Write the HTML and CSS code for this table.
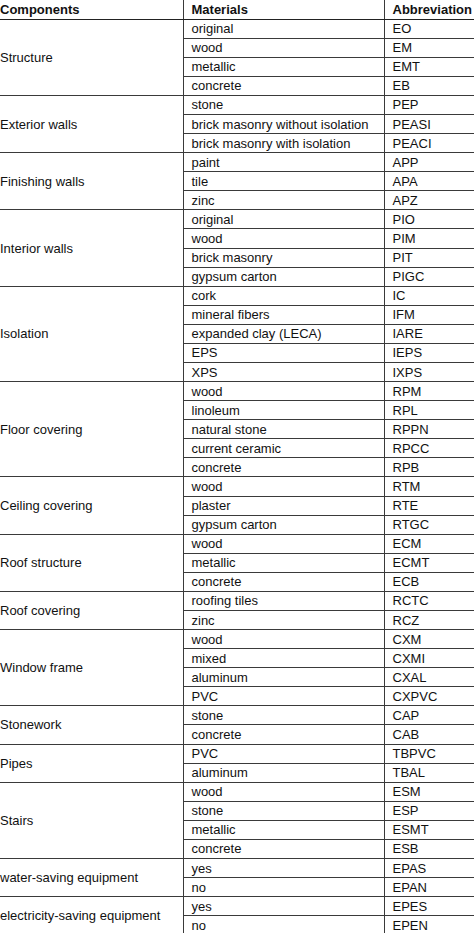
FILE: index.html
```html
<!DOCTYPE html>
<html lang="en">
<head>
<meta charset="utf-8">
<title>Components, materials and abbreviations</title>
<link rel="stylesheet" href="styles.css">
</head>
<body>
<div class="frame">
<table class="mat-table">
  <colgroup>
    <col class="col-comp">
    <col class="col-mat">
    <col class="col-abbr">
  </colgroup>
  <thead>
    <tr class="head-row">
      <th class="c-comp">Components</th>
      <th class="c-mat">Materials</th>
      <th class="c-abbr">Abbreviation</th>
    </tr>
  </thead>
  <tbody>
    <tr><td class="c-comp" rowspan="4">Structure</td><td class="c-mat">original</td><td class="c-abbr">EO</td></tr>
    <tr><td class="c-mat">wood</td><td class="c-abbr">EM</td></tr>
    <tr><td class="c-mat">metallic</td><td class="c-abbr">EMT</td></tr>
    <tr><td class="c-mat">concrete</td><td class="c-abbr">EB</td></tr>

    <tr><td class="c-comp" rowspan="3">Exterior walls</td><td class="c-mat">stone</td><td class="c-abbr">PEP</td></tr>
    <tr><td class="c-mat">brick masonry without isolation</td><td class="c-abbr">PEASI</td></tr>
    <tr><td class="c-mat">brick masonry with isolation</td><td class="c-abbr">PEACI</td></tr>

    <tr><td class="c-comp" rowspan="3">Finishing walls</td><td class="c-mat">paint</td><td class="c-abbr">APP</td></tr>
    <tr><td class="c-mat">tile</td><td class="c-abbr">APA</td></tr>
    <tr><td class="c-mat">zinc</td><td class="c-abbr">APZ</td></tr>

    <tr><td class="c-comp" rowspan="4">Interior walls</td><td class="c-mat">original</td><td class="c-abbr">PIO</td></tr>
    <tr><td class="c-mat">wood</td><td class="c-abbr">PIM</td></tr>
    <tr><td class="c-mat">brick masonry</td><td class="c-abbr">PIT</td></tr>
    <tr><td class="c-mat">gypsum carton</td><td class="c-abbr">PIGC</td></tr>

    <tr><td class="c-comp" rowspan="5">Isolation</td><td class="c-mat">cork</td><td class="c-abbr">IC</td></tr>
    <tr><td class="c-mat">mineral fibers</td><td class="c-abbr">IFM</td></tr>
    <tr><td class="c-mat">expanded clay (LECA)</td><td class="c-abbr">IARE</td></tr>
    <tr><td class="c-mat">EPS</td><td class="c-abbr">IEPS</td></tr>
    <tr><td class="c-mat">XPS</td><td class="c-abbr">IXPS</td></tr>

    <tr><td class="c-comp" rowspan="5">Floor covering</td><td class="c-mat">wood</td><td class="c-abbr">RPM</td></tr>
    <tr><td class="c-mat">linoleum</td><td class="c-abbr">RPL</td></tr>
    <tr><td class="c-mat">natural stone</td><td class="c-abbr">RPPN</td></tr>
    <tr><td class="c-mat">current ceramic</td><td class="c-abbr">RPCC</td></tr>
    <tr><td class="c-mat">concrete</td><td class="c-abbr">RPB</td></tr>

    <tr><td class="c-comp" rowspan="3">Ceiling covering</td><td class="c-mat">wood</td><td class="c-abbr">RTM</td></tr>
    <tr><td class="c-mat">plaster</td><td class="c-abbr">RTE</td></tr>
    <tr><td class="c-mat">gypsum carton</td><td class="c-abbr">RTGC</td></tr>

    <tr><td class="c-comp" rowspan="3">Roof structure</td><td class="c-mat">wood</td><td class="c-abbr">ECM</td></tr>
    <tr><td class="c-mat">metallic</td><td class="c-abbr">ECMT</td></tr>
    <tr><td class="c-mat">concrete</td><td class="c-abbr">ECB</td></tr>

    <tr><td class="c-comp" rowspan="2">Roof covering</td><td class="c-mat">roofing tiles</td><td class="c-abbr">RCTC</td></tr>
    <tr><td class="c-mat">zinc</td><td class="c-abbr">RCZ</td></tr>

    <tr><td class="c-comp" rowspan="4">Window frame</td><td class="c-mat">wood</td><td class="c-abbr">CXM</td></tr>
    <tr><td class="c-mat">mixed</td><td class="c-abbr">CXMI</td></tr>
    <tr><td class="c-mat">aluminum</td><td class="c-abbr">CXAL</td></tr>
    <tr><td class="c-mat">PVC</td><td class="c-abbr">CXPVC</td></tr>

    <tr><td class="c-comp" rowspan="2">Stonework</td><td class="c-mat">stone</td><td class="c-abbr">CAP</td></tr>
    <tr><td class="c-mat">concrete</td><td class="c-abbr">CAB</td></tr>

    <tr><td class="c-comp" rowspan="2">Pipes</td><td class="c-mat">PVC</td><td class="c-abbr">TBPVC</td></tr>
    <tr><td class="c-mat">aluminum</td><td class="c-abbr">TBAL</td></tr>

    <tr><td class="c-comp" rowspan="4">Stairs</td><td class="c-mat">wood</td><td class="c-abbr">ESM</td></tr>
    <tr><td class="c-mat">stone</td><td class="c-abbr">ESP</td></tr>
    <tr><td class="c-mat">metallic</td><td class="c-abbr">ESMT</td></tr>
    <tr><td class="c-mat">concrete</td><td class="c-abbr">ESB</td></tr>

    <tr><td class="c-comp" rowspan="2">water-saving equipment</td><td class="c-mat">yes</td><td class="c-abbr">EPAS</td></tr>
    <tr><td class="c-mat">no</td><td class="c-abbr">EPAN</td></tr>

    <tr><td class="c-comp" rowspan="2">electricity-saving equipment</td><td class="c-mat">yes</td><td class="c-abbr">EPES</td></tr>
    <tr><td class="c-mat">no</td><td class="c-abbr">EPEN</td></tr>
  </tbody>
</table>
</div>
</body>
</html>
```

FILE: styles.css
```css
html, body {
  margin: 0;
  padding: 0;
  background: #ffffff;
}

body {
  width: 474px;
  height: 933px;
  overflow: hidden;
}

.frame {
  width: 474px;
  height: 933px;
  overflow: hidden;
}

.mat-table {
  border-collapse: collapse;
  table-layout: fixed;
  width: 520px;
  font-family: "Liberation Sans", Arial, sans-serif;
  font-size: 13px;
  color: #111111;
  line-height: 1;
}

.col-comp {
  width: 183px;
}

.col-mat {
  width: 201px;
}

.col-abbr {
  width: 136px;
}

.mat-table tr {
  height: 19.08px;
}

.mat-table th,
.mat-table td {
  padding: 0;
  white-space: nowrap;
  vertical-align: middle;
  text-align: left;
  border: 1px solid #3a3a3a;
}

.mat-table th {
  font-weight: bold;
  border-top: none;
  border-bottom: 1px solid #222222;
}

.head-row {
  height: 19px;
}

.mat-table .c-comp {
  padding-left: 0;
  border-left: none;
}

.mat-table .c-mat {
  padding-left: 8px;
}

.mat-table .c-abbr {
  padding-left: 8px;
  border-right: none;
}
```
